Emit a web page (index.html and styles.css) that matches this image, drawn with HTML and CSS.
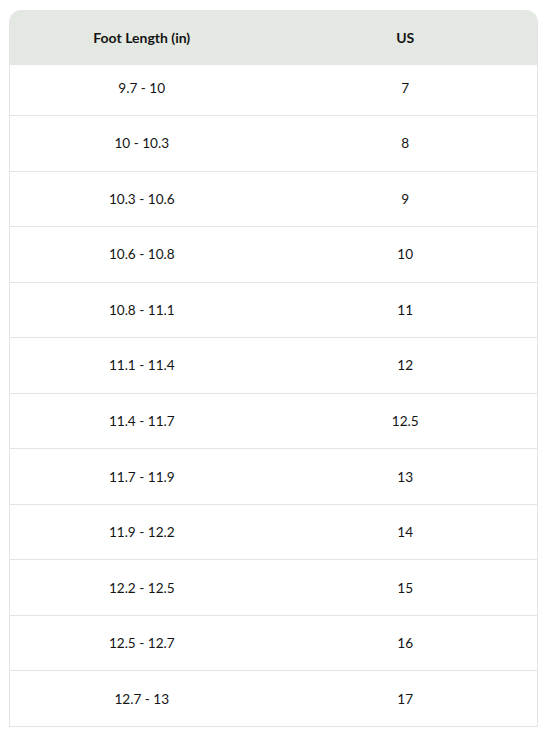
FILE: index.html
```html
<!DOCTYPE html>
<html>
<head>
<meta charset="utf-8">
<link rel="stylesheet" href="styles.css">
</head>
<body>
<div class="chart">
  <div class="row head"><div class="cell">Foot Length (in)</div><div class="cell">US</div></div>
  <div class="row first"><div class="cell">9.7 - 10</div><div class="cell">7</div></div>
  <div class="row"><div class="cell">10 - 10.3</div><div class="cell">8</div></div>
  <div class="row"><div class="cell">10.3 - 10.6</div><div class="cell">9</div></div>
  <div class="row"><div class="cell">10.6 - 10.8</div><div class="cell">10</div></div>
  <div class="row"><div class="cell">10.8 - 11.1</div><div class="cell">11</div></div>
  <div class="row"><div class="cell">11.1 - 11.4</div><div class="cell">12</div></div>
  <div class="row"><div class="cell">11.4 - 11.7</div><div class="cell">12.5</div></div>
  <div class="row"><div class="cell">11.7 - 11.9</div><div class="cell">13</div></div>
  <div class="row"><div class="cell">11.9 - 12.2</div><div class="cell">14</div></div>
  <div class="row"><div class="cell">12.2 - 12.5</div><div class="cell">15</div></div>
  <div class="row"><div class="cell">12.5 - 12.7</div><div class="cell">16</div></div>
  <div class="row"><div class="cell">12.7 - 13</div><div class="cell">17</div></div>
</div>
</body>
</html>
```
FILE: styles.css
```css
html, body { margin: 0; padding: 0; background: #fff; }
body { padding: 10px 0 0 9px; font-family: Lato, "Open Sans", sans-serif; color: #141414; font-size: 13.6px; }
.chart {
  width: 529px;
  border: 1px solid #e4e4e4;
  border-top: none;
  border-radius: 12px 12px 0 0;
  overflow: hidden;
  box-sizing: border-box;
}
.row {
  display: grid;
  grid-template-columns: 1fr 1fr;
  height: 55.55px;
  border-top: 1px solid #e4e4e4;
  box-sizing: border-box;
}
.row.head {
  height: 55px;
  background: #e4e8e3;
  border-top: none;
  font-weight: 700;
  font-size: 14px;
}
.row.first { height: 50px; border-top: none; padding-bottom: 4px; }
.cell {
  display: flex;
  align-items: center;
  justify-content: center;
}
```
